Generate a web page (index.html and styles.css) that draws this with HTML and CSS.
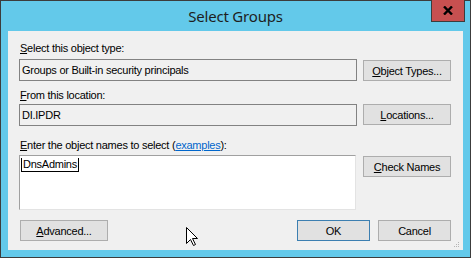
FILE: index.html
```html
<!DOCTYPE html>
<html lang="en">
<head>
    <meta charset="UTF-8">
    <meta name="viewport" content="width=device-width, initial-scale=1.0">
    <title>Select Groups</title>
    <link rel="stylesheet" href="styles.css">
</head>
<body>
    <div class="window">
        <!-- Title bar -->
        <div class="titlebar">
            <span></span>
            <div class="title">Select Groups</div>
            <button class="close" aria-label="Close">
                <svg width="10" height="9" viewBox="0 0 10 9">
                    <path d="M1 0.5 L9 8.5 M9 0.5 L1 8.5" stroke="#000" stroke-width="2.4" fill="none"/>
                </svg>
            </button>
        </div>

        <!-- Dialog body -->
        <div class="client">
            <div class="label label-first"><u>S</u>elect this object type:</div>
            <div class="field-row row-first">
                <div class="readonly">Groups or Built-in security principals</div>
                <button class="btn btn-offset"><u>O</u>bject Types...</button>
            </div>

            <div class="label label-second"><u>F</u>rom this location:</div>
            <div class="field-row row-second">
                <div class="readonly">DI.IPDR</div>
                <button class="btn"><u>L</u>ocations...</button>
            </div>

            <div class="label label-third"><u>E</u>nter the object names to select (<a href="#">examples</a>):</div>
            <div class="field-row row-third">
                <div class="names"><span class="selected">DnsAdmins</span></div>
                <button class="btn btn-offset"><u>C</u>heck Names</button>
            </div>

            <div class="footer">
                <button class="btn btn-advanced"><u>A</u>dvanced...</button>
                <div class="footer-right">
                    <button class="btn btn-small btn-default">OK</button>
                    <button class="btn btn-small">Cancel</button>
                </div>
            </div>

            <!-- Resize grip -->
            <svg class="grip" width="7" height="7" viewBox="0 0 7 7">
                <rect x="5" y="0" width="1" height="1" fill="#b5b5b5"/>
                <rect x="3" y="2" width="1" height="1" fill="#b5b5b5"/>
                <rect x="5" y="2" width="1" height="1" fill="#b5b5b5"/>
                <rect x="1" y="4" width="1" height="1" fill="#b5b5b5"/>
                <rect x="3" y="4" width="1" height="1" fill="#b5b5b5"/>
                <rect x="5" y="4" width="1" height="1" fill="#b5b5b5"/>
            </svg>
        </div>

        <!-- Mouse pointer -->
        <svg class="cursor" width="13" height="20" viewBox="0 0 13 20">
            <path d="M0.5 0.5 L0.5 16.5 L4.5 12.5 L7.5 18.5 L9.5 17.5 L6.5 11.5 L11.5 11.5 Z" fill="#fff" stroke="#000" stroke-width="1"/>
        </svg>
    </div>
</body>
</html>
```

FILE: styles.css
```css
/* General Styles */

body {
    margin: 0;
    font-family: "Liberation Sans", Arial, sans-serif;
    font-size: 11px;
    letter-spacing: -0.25px;
    color: #000;
}

u {
    text-decoration: underline;
    text-underline-offset: 1px;
}

.window {
    position: relative;
    width: 471px;
    height: 258px;
    box-sizing: border-box;
    border: 1px solid #3c3c3c;
    background-color: #63c9ea;
}

/* Title bar */

.titlebar {
    height: 30px;
    display: grid;
    grid-template-columns: 1fr auto 1fr;
    align-items: start;
}

.title {
    font-family: "Noto Sans", sans-serif;
    font-size: 15px;
    letter-spacing: -0.2px;
    line-height: 20px;
    padding-top: 5px;
    color: #1e1e1e;
}

.close {
    justify-self: end;
    margin: -1px 5px 0 0;
    width: 34px;
    height: 22px;
    padding: 0;
    border: 1px solid #3c3c3c;
    border-top: none;
    background-color: #c75050;
    display: flex;
    align-items: center;
    justify-content: center;
}

/* Dialog body */

.client {
    position: relative;
    margin: 0 7px;
    height: 219px;
    box-sizing: border-box;
    padding: 0 12px 0 11px;
    background-color: #f0f0f0;
}

.label {
    height: 13px;
    line-height: 13px;
    padding-left: 1px;
}

.label a {
    color: #0066cc;
}

.label-first { padding-top: 11px; }
.label-second { margin-top: 8px; }
.label-third { margin-top: 13px; }

.field-row {
    display: grid;
    grid-template-columns: 338px 88px;
    column-gap: 6px;
    align-items: start;
}

.row-first { margin-top: 4px; }
.row-second { margin-top: 2px; }
.row-third { margin-top: 3px; }

.readonly {
    height: 22px;
    box-sizing: border-box;
    border: 1px solid #828282;
    padding: 0 2px;
    line-height: 20px;
}

.names {
    width: 337px;
    height: 55px;
    box-sizing: border-box;
    background-color: #fff;
    border-top: 1px solid #a0a0a0;
    border-left: 1px solid #a0a0a0;
    border-right: 1px solid #e3e3e3;
    border-bottom: 1px solid #e3e3e3;
    padding: 2px 0 0 1px;
}

.selected {
    display: inline-block;
    line-height: 13px;
    padding: 0 1px;
    border: 1px solid #000;
    border-top: none;
}

.btn {
    width: 88px;
    height: 21px;
    padding: 0;
    box-sizing: border-box;
    border: 1px solid #adadad;
    background-color: #e1e1e1;
    font-family: "Liberation Sans", Arial, sans-serif;
    font-size: 11px;
    letter-spacing: -0.25px;
    color: #000;
}

.btn-offset { margin-top: 1px; }

.footer {
    margin-top: 10px;
    display: flex;
    justify-content: space-between;
}

.btn-advanced { margin-left: 1px; }

.footer-right {
    display: flex;
    gap: 8px;
}

.btn-small { width: 73px; }

.btn-default { border-color: #3c7fb1; }

.grip {
    position: absolute;
    right: 3px;
    bottom: 1px;
}

.cursor {
    position: absolute;
    left: 185px;
    top: 226px;
}
```
